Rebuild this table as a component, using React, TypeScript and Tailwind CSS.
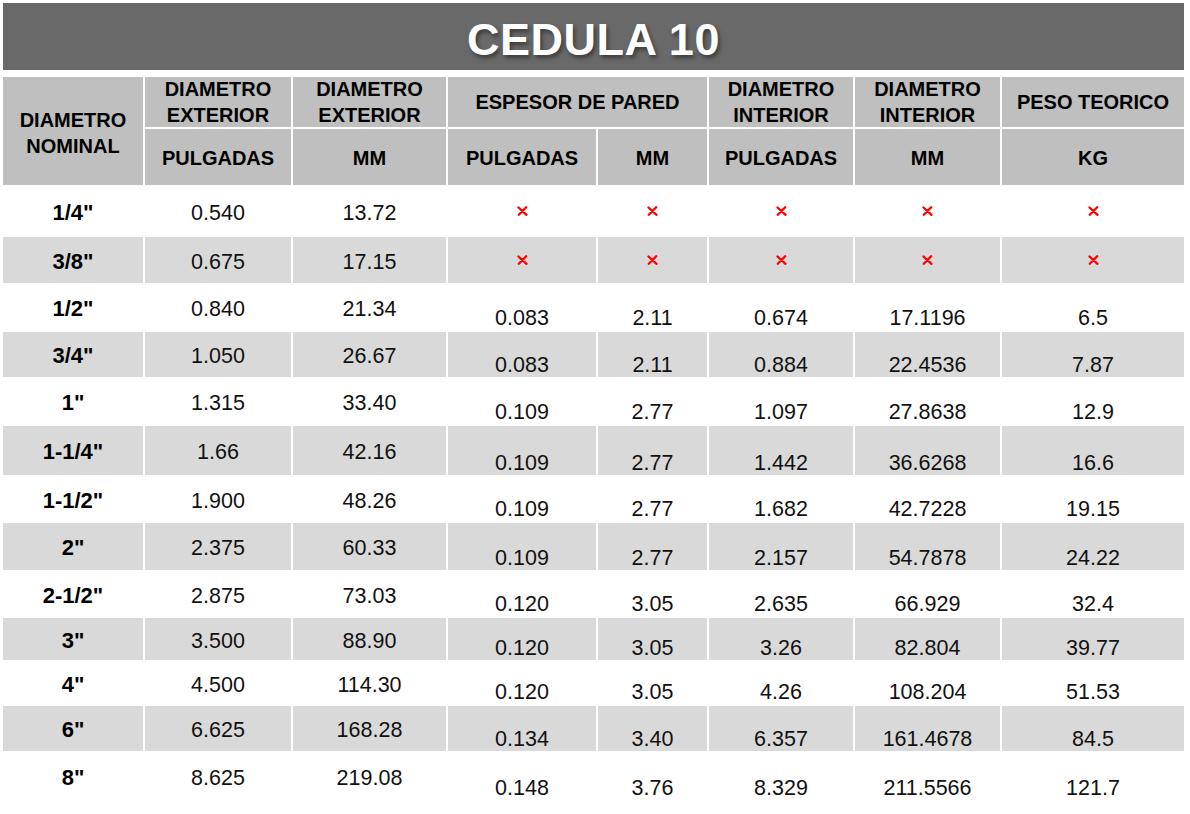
const rowHeights = ['h-[48px]', 'h-[46px]', 'h-[45px]', 'h-[45px]', 'h-[45px]', 'h-[49px]', 'h-[44px]', 'h-[47px]', 'h-[44px]', 'h-[42px]', 'h-[42px]', 'h-[45px]', 'h-[47px]'];

type Row = {
  nominal: string;
  odIn: string;
  odMm: string;
  rest: string[] | null;
};

const rows: Row[] = [
  { nominal: '1/4"', odIn: '0.540', odMm: '13.72', rest: null },
  { nominal: '3/8"', odIn: '0.675', odMm: '17.15', rest: null },
  { nominal: '1/2"', odIn: '0.840', odMm: '21.34', rest: ['0.083', '2.11', '0.674', '17.1196', '6.5'] },
  { nominal: '3/4"', odIn: '1.050', odMm: '26.67', rest: ['0.083', '2.11', '0.884', '22.4536', '7.87'] },
  { nominal: '1"', odIn: '1.315', odMm: '33.40', rest: ['0.109', '2.77', '1.097', '27.8638', '12.9'] },
  { nominal: '1-1/4"', odIn: '1.66', odMm: '42.16', rest: ['0.109', '2.77', '1.442', '36.6268', '16.6'] },
  { nominal: '1-1/2"', odIn: '1.900', odMm: '48.26', rest: ['0.109', '2.77', '1.682', '42.7228', '19.15'] },
  { nominal: '2"', odIn: '2.375', odMm: '60.33', rest: ['0.109', '2.77', '2.157', '54.7878', '24.22'] },
  { nominal: '2-1/2"', odIn: '2.875', odMm: '73.03', rest: ['0.120', '3.05', '2.635', '66.929', '32.4'] },
  { nominal: '3"', odIn: '3.500', odMm: '88.90', rest: ['0.120', '3.05', '3.26', '82.804', '39.77'] },
  { nominal: '4"', odIn: '4.500', odMm: '114.30', rest: ['0.120', '3.05', '4.26', '108.204', '51.53'] },
  { nominal: '6"', odIn: '6.625', odMm: '168.28', rest: ['0.134', '3.40', '6.357', '161.4678', '84.5'] },
  { nominal: '8"', odIn: '8.625', odMm: '219.08', rest: ['0.148', '3.76', '8.329', '211.5566', '121.7'] },
];

function Cross() {
  return (
    <svg width="11" height="10" viewBox="0 0 11 10" aria-label="no disponible">
      <path d="M1.5 1.5 L9.5 8.8 M9.2 1.2 L1.8 8.8" stroke="#ff0000" strokeWidth="2.3" strokeLinecap="round" fill="none" />
    </svg>
  );
}

function HeadCell({ children, className = '' }: { children: React.ReactNode; className?: string }) {
  return (
    <div className={`bg-[#bfbfbf] flex items-center justify-center text-center text-[20px] leading-[26px] font-bold text-black ${className}`}>
      {children}
    </div>
  );
}

export default function App() {
  return (
    <div className="w-[1190px] h-[814px] bg-white pt-[3px] pl-[3px] font-['Liberation_Sans',Arial,sans-serif]">
      <div className="w-[1181px] h-[67px] bg-[#696969] flex items-center justify-center pt-[6px]">
        <h1 className="text-white text-[45px] font-bold leading-none tracking-[0.5px] [text-shadow:2px_3px_4px_rgba(0,0,0,0.45)]">
          CEDULA 10
        </h1>
      </div>

      <div className="mt-[7px] grid grid-cols-[140px_146px_153px_148px_109px_144px_145px_182px] grid-rows-[50px_56px] gap-[2px]">
        <HeadCell className="row-span-2 pt-[4px]">
          DIAMETRO
          <br />
          NOMINAL
        </HeadCell>
        <HeadCell>
          DIAMETRO
          <br />
          EXTERIOR
        </HeadCell>
        <HeadCell>
          DIAMETRO
          <br />
          EXTERIOR
        </HeadCell>
        <HeadCell className="col-span-2">ESPESOR DE PARED</HeadCell>
        <HeadCell>
          DIAMETRO
          <br />
          INTERIOR
        </HeadCell>
        <HeadCell>
          DIAMETRO
          <br />
          INTERIOR
        </HeadCell>
        <HeadCell>PESO TEORICO</HeadCell>

        <HeadCell className="pt-[2px]">PULGADAS</HeadCell>
        <HeadCell className="pt-[2px]">MM</HeadCell>
        <HeadCell className="pt-[2px]">PULGADAS</HeadCell>
        <HeadCell className="pt-[2px]">MM</HeadCell>
        <HeadCell className="pt-[2px]">PULGADAS</HeadCell>
        <HeadCell className="pt-[2px]">MM</HeadCell>
        <HeadCell className="pt-[2px]">KG</HeadCell>
      </div>

      <div className="mt-[2px] flex flex-col gap-[2px]">
        {rows.map((r, i) => {
          const bg = i % 2 === 1 ? 'bg-[#d9d9d9]' : 'bg-white';
          const cell = `${bg} flex justify-center text-[21.5px] leading-[24px] text-[#111]`;
          return (
            <div
              key={r.nominal}
              className={`grid grid-cols-[140px_146px_153px_148px_109px_144px_145px_182px] gap-x-[2px] ${rowHeights[i]}`}
            >
              <div className={`${cell} items-center pt-[3px] text-[22px] font-bold text-black`}>{r.nominal}</div>
              <div className={`${cell} items-center pt-[3px]`}>{r.odIn}</div>
              <div className={`${cell} items-center pt-[3px]`}>{r.odMm}</div>
              {r.rest
                ? r.rest.map((v, j) => (
                    <div key={j} className={`${cell} items-end`}>
                      {v}
                    </div>
                  ))
                : [0, 1, 2, 3, 4].map((j) => (
                    <div key={j} className={`${cell} items-center`}>
                      <Cross />
                    </div>
                  ))}
            </div>
          );
        })}
      </div>
    </div>
  );
}
